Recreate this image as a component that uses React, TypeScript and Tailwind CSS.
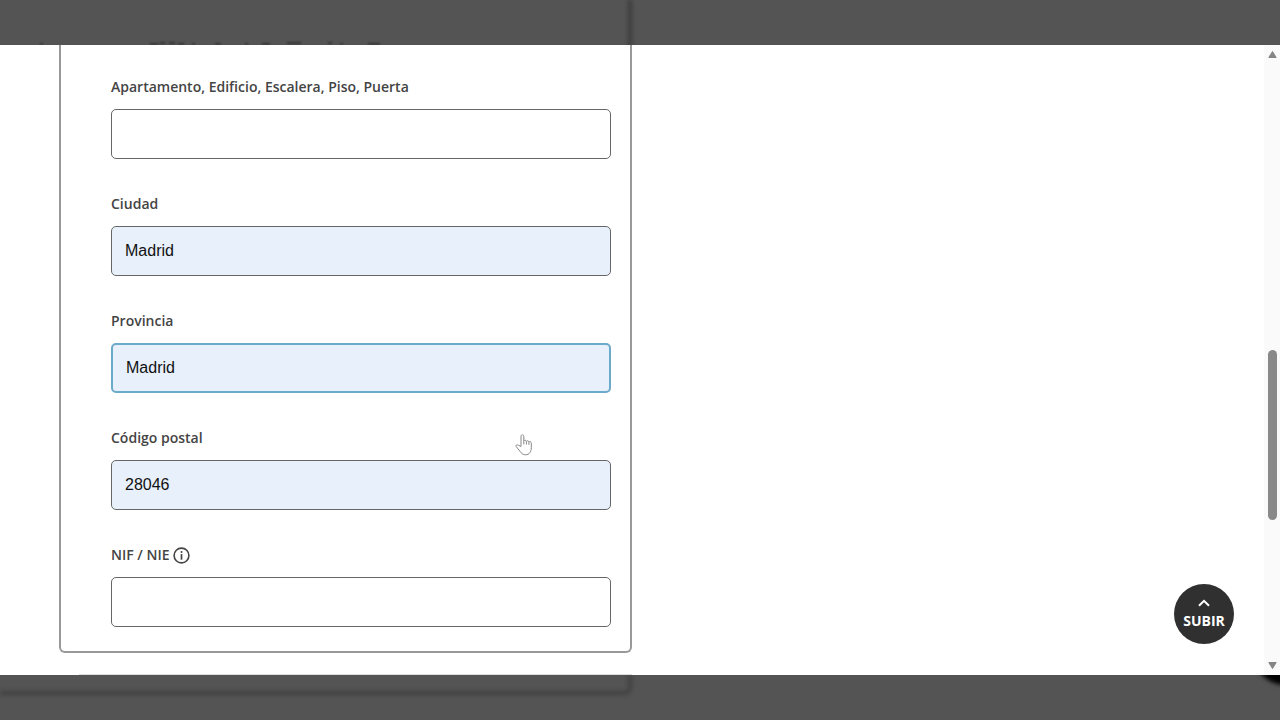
import React, { useState } from 'react';

const fields = [
  { id: 'apartamento', label: 'Apartamento, Edificio, Escalera, Piso, Puerta', value: '' },
  { id: 'ciudad', label: 'Ciudad', value: 'Madrid' },
  { id: 'provincia', label: 'Provincia', value: 'Madrid', active: true },
  { id: 'codigo-postal', label: 'Código postal', value: '28046', pointer: true },
  { id: 'nif', label: 'NIF / NIE', value: '', info: true },
];

const InfoIcon = () => (
  <svg width="17" height="17" viewBox="0 0 17 17" fill="none" aria-hidden="true">
    <circle cx="8.5" cy="8.5" r="7.4" stroke="#444444" strokeWidth="1.6" />
    <circle cx="8.5" cy="5" r="1" fill="#444444" />
    <path d="M8.5 7.1v5.6" stroke="#444444" strokeWidth="1.7" />
  </svg>
);

const HandPointer = () => (
  <svg
    className="absolute right-[78px] top-2 pointer-events-none"
    width="18"
    height="22"
    viewBox="0 0 18 22"
    fill="#ffffff"
    stroke="#888888"
    strokeWidth="1"
    strokeLinejoin="round"
    aria-hidden="true"
  >
    <path d="M6 12.5V2.3c0-2 2.8-2 2.8 0v4.5c.3-1 2.4-.8 2.6.5.4-.9 2.3-.6 2.5.7.5-.8 2.4-.4 2.4 1.2v4.6c0 4-2.2 7-5.6 7-3 0-4.4-1.5-5.6-3.4L1.2 12.6c-.9-1.4.9-2.4 2-1.4z" />
    <path d="M8.8 6.8v3.6M11.4 7.5v3M13.9 8.2v2.6" fill="none" />
  </svg>
);

type FieldProps = (typeof fields)[number];

const Field = ({ id, label, value, active, pointer, info }: FieldProps) => {
  const [text, setText] = useState(value);

  return (
    <div className="relative">
      <div className="flex items-center gap-1 h-6 mb-[10px]">
        <label htmlFor={id} className="text-sm leading-6 font-semibold text-[#444444]">
          {label}
        </label>
        {info && <InfoIcon />}
      </div>
      <input
        id={id}
        type="text"
        value={text}
        onChange={(e) => setText(e.target.value)}
        className={`block w-full h-[50px] rounded-[5px] px-[13px] font-['Liberation_Sans',Arial,sans-serif] text-base text-[#111111] outline-none ${
          active ? 'border-2 border-[#6caacb]' : 'border border-[#666666]'
        } ${text ? 'bg-[#e8f0fb]' : 'bg-white'}`}
      />
      {pointer && <HandPointer />}
    </div>
  );
};

const Scrollbar = () => (
  <div className="w-4 shrink-0 flex flex-col items-center bg-[#fafafa] py-[5px]">
    <button type="button" aria-label="Desplazar arriba">
      <svg width="9" height="9" viewBox="0 0 9 9" className="block">
        <path d="M4.5 1.5L8.2 7.5H.8z" fill="#858585" stroke="#858585" strokeLinejoin="round" />
      </svg>
    </button>
    <div className="flex-1 flex flex-col items-center">
      <div className="grow-[291]"></div>
      <div className="w-[9px] h-[170px] rounded-full bg-[#898989]"></div>
      <div className="grow-[141]"></div>
    </div>
    <button type="button" aria-label="Desplazar abajo">
      <svg width="9" height="9" viewBox="0 0 9 9" className="block">
        <path d="M4.5 7.5L.8 1.5h7.4z" fill="#858585" stroke="#858585" strokeLinejoin="round" />
      </svg>
    </button>
  </div>
);

export default function App() {
  return (
    <div className="min-h-screen flex flex-col bg-[#545454] font-['Open_Sans',sans-serif]">
      {/* Franja superior difuminada */}
      <div className="relative h-[45px] shrink-0 overflow-hidden pr-4">
        <div className="w-1/2 h-16 border-r-4 border-[#3c3c3c] blur-[2px]"></div>
        <svg className="absolute left-10 bottom-0 blur-[1px]" width="344" height="3" aria-hidden="true">
          <path
            d="M0 2h3M110 2h8M120 1h5M129 1h6M138 2h6M152 2h3M175 2h6M205 2h3M222 2h8M247 1h14M288 1h4M300 2h3M328 2h12"
            stroke="#333333"
            strokeWidth="2"
          />
        </svg>
      </div>

      <main className="relative flex-1 flex bg-white">
        <div className="flex-1">
          <div className="w-1/2 h-full flex flex-col justify-between pl-[59px]">
            <form
              className="flex flex-col gap-[33px] border-2 border-t-0 border-[#999999] rounded-b-md pt-[30px] pb-6 pl-[50px] pr-[19px]"
              onSubmit={(e) => e.preventDefault()}
            >
              {fields.map((field) => (
                <Field key={field.id} {...field} />
              ))}
            </form>
            <div className="ml-5 h-px bg-[#dddddd]"></div>
          </div>
        </div>
        <Scrollbar />

        <button
          type="button"
          className="absolute right-[46px] bottom-[31px] size-[60px] rounded-full bg-[#303030] flex flex-col items-center justify-center gap-1 pt-0.5 text-white"
        >
          <svg width="12" height="8" viewBox="0 0 12 8" fill="none" aria-hidden="true">
            <path d="M1 6.8L6 1.8l5 5" stroke="#ffffff" strokeWidth="2" />
          </svg>
          <span className="text-sm leading-5 font-bold">SUBIR</span>
        </button>
      </main>

      {/* Franja inferior difuminada */}
      <div className="relative h-[45px] shrink-0 overflow-hidden pr-4">
        <div className="w-1/2 h-5 border-r-4 border-b-4 border-[#404040] rounded-br-lg blur-[2px]"></div>
        <div className="absolute -right-10 -top-[58px] size-[68px] rounded-full bg-black blur-[2px]"></div>
      </div>
    </div>
  );
}
